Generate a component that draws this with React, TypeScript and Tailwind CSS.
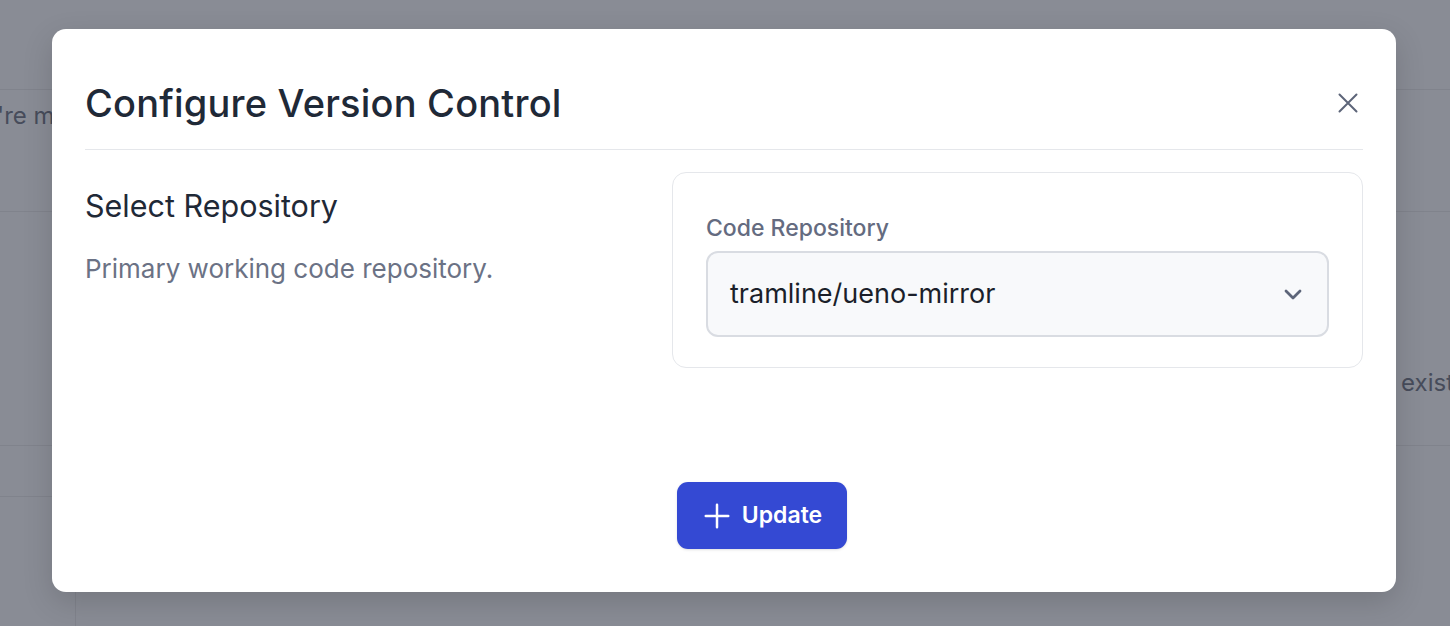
import React from "react";

function Background() {
  return (
    <div className="flex flex-col h-full text-[#474c5b] text-[24px]">
      <div className="h-[90px] border-b border-[#80838c]" />
      <div className="h-[122px] border-b border-[#80838c] flex items-start pt-[8px]">
        <span className="ml-[-3px]">'re m</span>
      </div>
      <div className="h-[234px] border-b border-[#80838c] flex justify-end items-end pb-[44px]">
        <span className="mr-[-4px]">e exist</span>
      </div>
      <div className="h-[51px] w-[76px] border-b border-[#80838c]" />
      <div className="flex-1 w-[76px] border-r border-[#80838c]" />
    </div>
  );
}

export default function App() {
  return (
    <div
      className="relative w-[1450px] h-[626px] overflow-hidden bg-[#898c95]"
      style={{ fontFamily: "Inter, 'Noto Sans', sans-serif" }}
    >
      <Background />

      {/* modal overlay */}
      <div className="absolute inset-0 flex items-start justify-start pl-[52px] pt-[29px]">
        <div className="w-[1344px] h-[563px] rounded-[14px] bg-white shadow-[0_10px_30px_rgba(0,0,0,0.15)] px-[33px] flex flex-col">
          <div className="flex items-center justify-between h-[121px] pt-[27px] border-b border-[#e5e7eb]">
            <h1 className="text-[38px] font-medium tracking-[0.2px] text-[#1f2937] leading-none">
              Configure Version Control
            </h1>
            <svg width="20" height="20" viewBox="0 0 20 20" className="mr-[5px]" fill="none" stroke="#5d6579" strokeWidth="2" strokeLinecap="round">
              <path d="M1.5 1.5L18.5 18.5M18.5 1.5L1.5 18.5" />
            </svg>
          </div>
          <div className="flex pt-[22px]">
            <div className="w-[587px] shrink-0 pt-[16px]">
              <div className="text-[30.5px] text-[#1f2937] leading-[36px]">Select Repository</div>
              <div className="mt-[29px] text-[26px] text-[#6b7285] leading-[32px]">
                Primary working code repository.
              </div>
            </div>
            <div className="flex-1 border border-[#e5e7eb] rounded-[14px] h-[196px] px-[33px] pt-[40px]">
              <div className="text-[23px] font-medium text-[#646b80] leading-[30px]">Code Repository</div>
              <div className="mt-[8px] h-[86px] rounded-[12px] border-2 border-[#d9dce2] bg-[#f8f9fb] flex items-center justify-between pl-[22px] pr-[22px]">
                <span className="text-[27px] text-[#1b1f2a]">tramline/ueno-mirror</span>
                <svg width="24" height="24" viewBox="0 0 24 24" fill="none" stroke="#5d6579" strokeWidth="2.8" strokeLinecap="round" strokeLinejoin="round">
                  <path d="M5 9l7 7 7-7" />
                </svg>
              </div>
            </div>
          </div>
          <div className="flex pl-[592px] pt-[114px]">
            <button className="h-[67px] w-[170px] rounded-[11px] bg-[#3449d3] text-white flex items-center justify-center gap-[10px] text-[23px] font-semibold shadow-sm">
              <svg width="30" height="30" viewBox="0 0 24 24" fill="none" stroke="white" strokeWidth="2" strokeLinecap="round">
                <path d="M12 3v18M3 12h18" />
              </svg>
              Update
            </button>
          </div>
        </div>
      </div>
    </div>
  );
}
